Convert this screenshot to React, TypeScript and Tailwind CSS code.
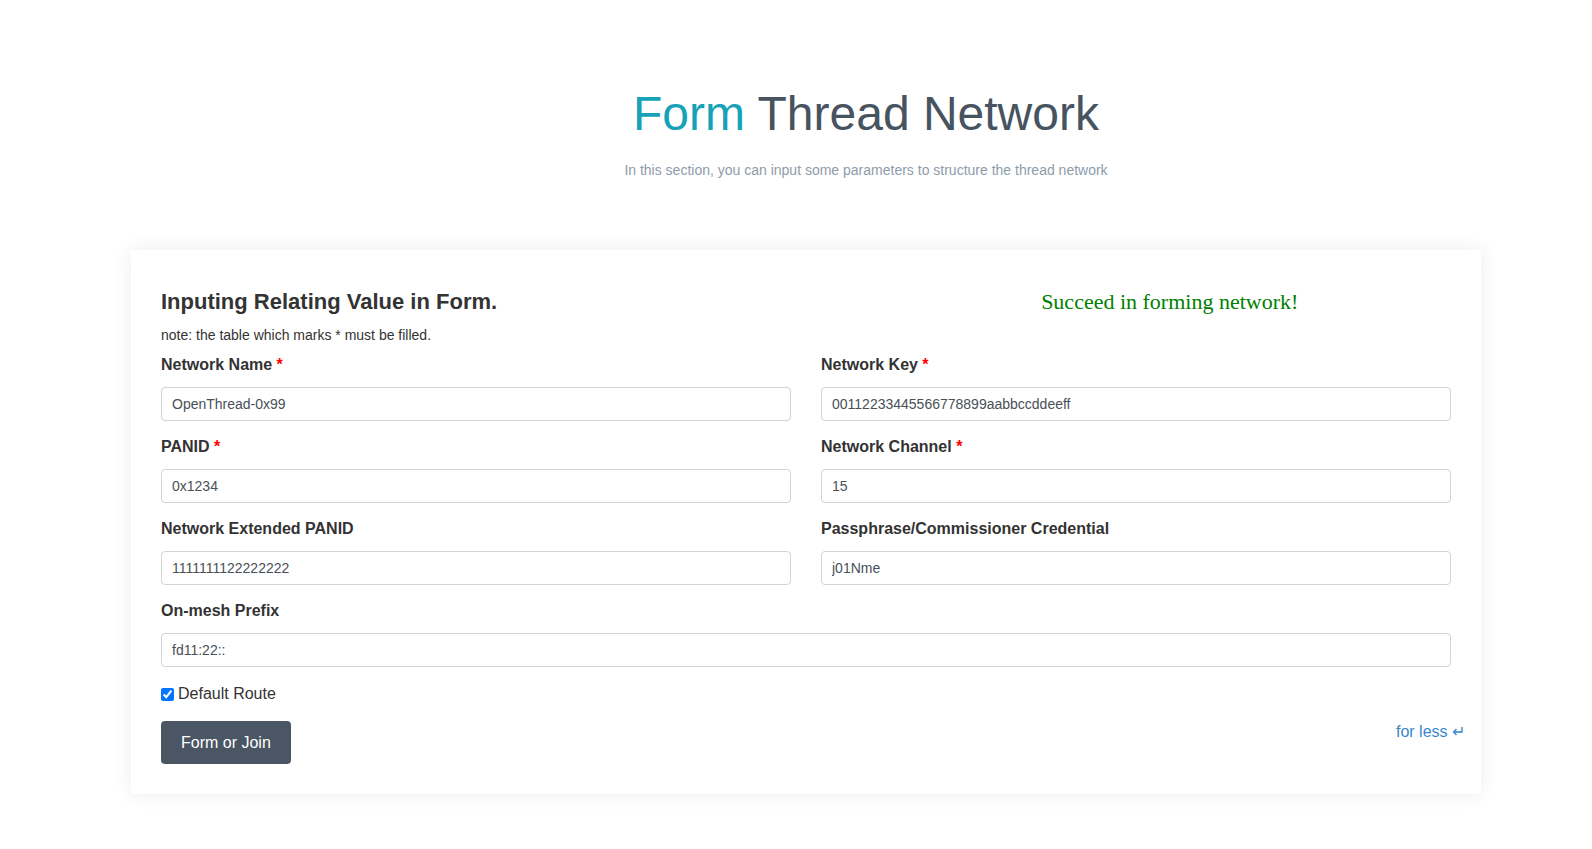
const fields: { label: string; value: string; required?: boolean }[][] = [
  [
    { label: "Network Name", value: "OpenThread-0x99", required: true },
    { label: "Network Key", value: "00112233445566778899aabbccddeeff", required: true },
  ],
  [
    { label: "PANID", value: "0x1234", required: true },
    { label: "Network Channel", value: "15", required: true },
  ],
  [
    { label: "Network Extended PANID", value: "1111111122222222" },
    { label: "Passphrase/Commissioner Credential", value: "j01Nme" },
  ],
];

const Field = ({ label, value, required }: { label: string; value: string; required?: boolean }) => (
  <div className="flex flex-col">
    <label className="h-6 mb-[10px] text-[16px] leading-6 font-bold text-[#333]">
      {label}
      {required && <span className="text-[#ff0000]"> *</span>}
    </label>
    <input
      type="text"
      defaultValue={value}
      className="h-[34px] w-full rounded-[4px] border border-[#ced4da] bg-white px-[10px] text-[14px] text-[#495057] outline-none"
    />
  </div>
);

export default function App() {
  return (
    <div className="min-h-screen bg-white font-['Liberation_Sans',Arial,sans-serif] text-[#333]">
      {/* header */}
      <div className="pl-[140px] pt-[85px] text-center">
        <h1 className="text-[48px] leading-[58px]">
          <span className="text-[#17a2b8]">Form</span> <span className="text-[#47535f]">Thread Network</span>
        </h1>
        <p className="mt-[17px] text-[14px] leading-5 text-[#8e9cab]">
          In this section, you can input some parameters to structure the thread network
        </p>
      </div>

      {/* card */}
      <div className="ml-[131px] mt-[70px] w-[1350px] bg-white px-[30px] pt-[39px] pb-[30px] shadow-[0_0_18px_rgba(0,0,0,0.08)]">
        <div className="flex items-center">
          <h2 className="text-[22px] leading-[26px] font-bold text-[#333]">Inputing Relating Value in Form.</h2>
          <span className="ml-[544px] font-['Liberation_Serif',serif] text-[22px] leading-[26px] text-[#008000]">
            Succeed in forming network!
          </span>
        </div>
        <p className="mt-[10px] mb-[7px] text-[14px] leading-[21px] text-[#333]">
          note: the table which marks * must be filled.
        </p>

        <div className="flex flex-col gap-[14px]">
          {fields.map((row, i) => (
            <div key={i} className="grid grid-cols-2 gap-[30px]">
              {row.map((f) => (
                <Field key={f.label} {...f} />
              ))}
            </div>
          ))}
          <Field label="On-mesh Prefix" value="fd11:22::" />
        </div>

        <label className="mt-[15px] flex h-6 items-center text-[16px] leading-6 text-[#333]">
          <input type="checkbox" defaultChecked className="m-0 mr-[4px] h-[13px] w-[13px]" />
          Default Route
        </label>

        <div className="mt-[15px] flex items-start justify-between">
          <button
            type="button"
            className="h-[43px] rounded-[4px] bg-[#4a5663] px-5 text-[16px] text-white"
          >
            Form or Join
          </button>
          <a className="-mr-[14px] -mt-[1px] text-[16px] leading-6 text-[#3a87c9]" href="#">
            for less ↵
          </a>
        </div>
      </div>
    </div>
  );
}
